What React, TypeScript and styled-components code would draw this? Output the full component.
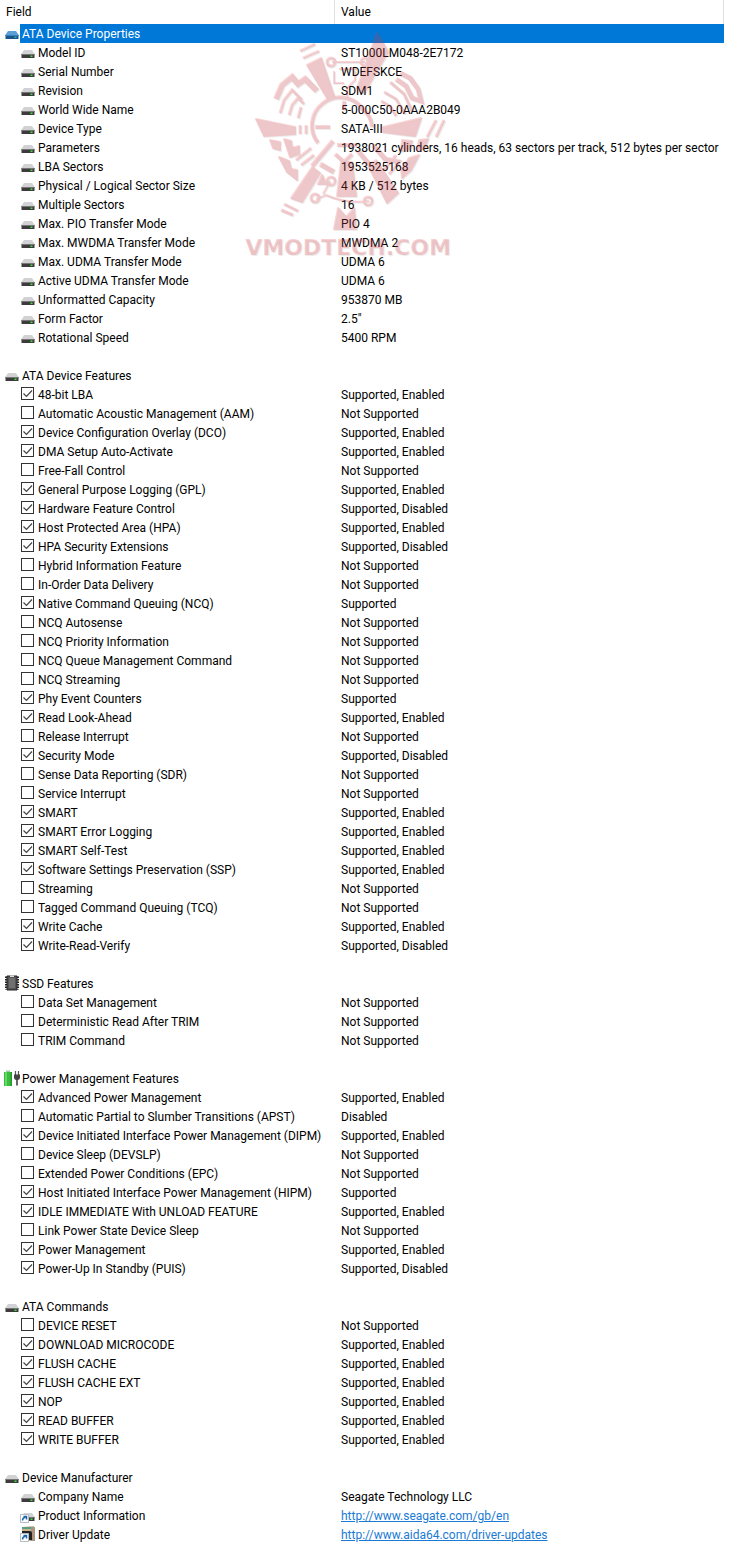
import React from "react";
import styled, { createGlobalStyle, css } from "styled-components";

type IconName = "drive" | "chip" | "power" | "driveLink" | "updateLink";
type Item = { name: string; value: string; icon?: IconName; checked?: boolean; href?: string };
type Group = { title: string; icon: IconName; selected?: boolean; items: Item[] };

const prop = (name: string, value: string): Item => ({ name, value, icon: "drive" });
const on = (name: string, value = "Supported, Enabled"): Item => ({ name, value, checked: true });
const off = (name: string, value = "Not Supported"): Item => ({ name, value, checked: false });

const groups: Group[] = [
  {
    title: "ATA Device Properties",
    icon: "drive",
    selected: true,
    items: [
      prop("Model ID", "ST1000LM048-2E7172"),
      prop("Serial Number", "WDEFSKCE"),
      prop("Revision", "SDM1"),
      prop("World Wide Name", "5-000C50-0AAA2B049"),
      prop("Device Type", "SATA-III"),
      prop("Parameters", "1938021 cylinders, 16 heads, 63 sectors per track, 512 bytes per sector"),
      prop("LBA Sectors", "1953525168"),
      prop("Physical / Logical Sector Size", "4 KB / 512 bytes"),
      prop("Multiple Sectors", "16"),
      prop("Max. PIO Transfer Mode", "PIO 4"),
      prop("Max. MWDMA Transfer Mode", "MWDMA 2"),
      prop("Max. UDMA Transfer Mode", "UDMA 6"),
      prop("Active UDMA Transfer Mode", "UDMA 6"),
      prop("Unformatted Capacity", "953870 MB"),
      prop("Form Factor", '2.5"'),
      prop("Rotational Speed", "5400 RPM"),
    ],
  },
  {
    title: "ATA Device Features",
    icon: "drive",
    items: [
      on("48-bit LBA"),
      off("Automatic Acoustic Management (AAM)"),
      on("Device Configuration Overlay (DCO)"),
      on("DMA Setup Auto-Activate"),
      off("Free-Fall Control"),
      on("General Purpose Logging (GPL)"),
      on("Hardware Feature Control", "Supported, Disabled"),
      on("Host Protected Area (HPA)"),
      on("HPA Security Extensions", "Supported, Disabled"),
      off("Hybrid Information Feature"),
      off("In-Order Data Delivery"),
      on("Native Command Queuing (NCQ)", "Supported"),
      off("NCQ Autosense"),
      off("NCQ Priority Information"),
      off("NCQ Queue Management Command"),
      off("NCQ Streaming"),
      on("Phy Event Counters", "Supported"),
      on("Read Look-Ahead"),
      off("Release Interrupt"),
      on("Security Mode", "Supported, Disabled"),
      off("Sense Data Reporting (SDR)"),
      off("Service Interrupt"),
      on("SMART"),
      on("SMART Error Logging"),
      on("SMART Self-Test"),
      on("Software Settings Preservation (SSP)"),
      off("Streaming"),
      off("Tagged Command Queuing (TCQ)"),
      on("Write Cache"),
      on("Write-Read-Verify", "Supported, Disabled"),
    ],
  },
  {
    title: "SSD Features",
    icon: "chip",
    items: [off("Data Set Management"), off("Deterministic Read After TRIM"), off("TRIM Command")],
  },
  {
    title: "Power Management Features",
    icon: "power",
    items: [
      on("Advanced Power Management"),
      off("Automatic Partial to Slumber Transitions (APST)", "Disabled"),
      on("Device Initiated Interface Power Management (DIPM)"),
      off("Device Sleep (DEVSLP)"),
      off("Extended Power Conditions (EPC)"),
      on("Host Initiated Interface Power Management (HIPM)", "Supported"),
      on("IDLE IMMEDIATE With UNLOAD FEATURE"),
      off("Link Power State Device Sleep"),
      on("Power Management"),
      on("Power-Up In Standby (PUIS)", "Supported, Disabled"),
    ],
  },
  {
    title: "ATA Commands",
    icon: "drive",
    items: [
      off("DEVICE RESET"),
      on("DOWNLOAD MICROCODE"),
      on("FLUSH CACHE"),
      on("FLUSH CACHE EXT"),
      on("NOP"),
      on("READ BUFFER"),
      on("WRITE BUFFER"),
    ],
  },
  {
    title: "Device Manufacturer",
    icon: "drive",
    items: [
      prop("Company Name", "Seagate Technology LLC"),
      { name: "Product Information", value: "http://www.seagate.com/gb/en", icon: "driveLink", href: "http://www.seagate.com/gb/en" },
      { name: "Driver Update", value: "http://www.aida64.com/driver-updates", icon: "updateLink", href: "http://www.aida64.com/driver-updates" },
    ],
  },
];

const GlobalStyle = createGlobalStyle`
  body {
    margin: 0;
    background: #fff;
    color: #000;
    font: 12px/17px Roboto, "Segoe UI", sans-serif;
  }
`;

const Page = styled.main`
  position: relative;
  padding-right: 13px;
`;

const Sheet = styled.table`
  width: 100%;
  table-layout: fixed;
  border-collapse: separate;
  border-spacing: 0;
`;

const FieldColumn = styled.col`
  width: 335px;
`;

const HeadCell = styled.th`
  box-sizing: border-box;
  height: 24px;
  padding: 1px 6px 0;
  border-right: 1px solid #dfdfdf;
  font-weight: 400;
  text-align: left;
`;

const Row = styled.tr`
  height: 19px;
`;

const NameCell = styled.th<{ $nested?: boolean }>`
  padding: 0 0 0 ${(p) => (p.$nested ? 20 : 4)}px;
  font-weight: 400;
  text-align: left;
  white-space: nowrap;
`;

const ValueCell = styled.td<{ $selected?: boolean }>`
  padding: 2px 6px 0;
  white-space: nowrap;
  ${(p) => p.$selected && css`background: #0078d7;`}
`;

const nameLine = css`
  display: flex;
  align-items: center;
  height: 19px;
`;

const NameLine = styled.div`
  ${nameLine}
`;

const CheckLine = styled.label`
  ${nameLine}
`;

const Name = styled.span<{ $selected?: boolean }>`
  flex: 1;
  padding: 2px 0 0 2px;
  ${(p) => p.$selected && css`
    background: #0078d7;
    color: #fff;
  `}
`;

const Glyph = styled.svg`
  flex: none;
  width: 16px;
  height: 16px;
  margin-bottom: 1px;
`;

const CheckSlot = styled.span`
  display: grid;
  flex: none;
  width: 13px;
  height: 13px;
  margin: 0 2px 2px 1px;

  > * {
    grid-area: 1 / 1;
  }
`;

const CheckInput = styled.input`
  appearance: none;
  box-sizing: border-box;
  width: 13px;
  height: 13px;
  margin: 0;
  border: 1px solid #333;
  background: #fff;
`;

const CheckMark = styled.svg`
  width: 13px;
  height: 13px;
  pointer-events: none;
  visibility: hidden;

  ${CheckInput}:checked + & {
    visibility: visible;
  }
`;

const Link = styled.a`
  color: #1a7ad4;
  text-decoration: underline;
`;

const Watermark = styled.div`
  position: absolute;
  top: 30px;
  left: 244px;
  width: 208px;
  display: flex;
  flex-direction: column;
  align-items: center;
  pointer-events: none;
`;

const Emblem = styled.svg`
  width: 208px;
  height: 202px;
`;

const Brand = styled.div`
  color: rgba(236, 70, 76, 0.25);
  font: 700 22px/32px "DejaVu Sans", sans-serif;
  text-shadow: 1px 1px 1px rgba(90, 90, 90, 0.12);
`;

function Drive({ blue }: { blue?: boolean }) {
  return (
    <>
      <path d="M4 6h8l3 4.500H1z" fill={blue ? "#5b9fd6" : "#d0d2d4"} />
      <path d="M1.500 10h13v3.500q0 .5-.5.5H2q-.5 0-.5-.5z" fill={blue ? "#1c5689" : "#3c3c3c"} />
      <path d="M1.500 10h13v1h-13z" fill={blue ? "#357fbe" : "#777"} />
      <path d="M10.500 11.500h2V13h-2z" fill={blue ? "#22b7a0" : "#3ee03e"} />
    </>
  );
}

function Shortcut() {
  return (
    <>
      <path d="M.5 7.500h8v8h-8z" fill="#fff" stroke="#b5bcc4" />
      <path d="M2.500 13.500q0-3 3-3.300M3.500 9.500h3v3" fill="none" stroke="#1765ad" strokeWidth="1.500" />
    </>
  );
}

function RowIcon({ name, blue }: { name: IconName; blue?: boolean }) {
  return (
    <Glyph viewBox="0 0 16 16" aria-hidden="true">
      {name === "drive" && <Drive blue={blue} />}
      {name === "chip" && (
        <>
          <path d="M3 1h10v14H3z" fill="#555" stroke="#222" />
          <path d="M2 1.500v13M14 1.500v13" fill="none" stroke="#222" strokeWidth="2" strokeDasharray="1.500 1" />
          <path d="M5 3h6v10H5z" fill="#707070" />
          <path d="M6 .5h4v1.500H6z" fill="#ddd" />
        </>
      )}
      {name === "power" && (
        <>
          <path d="M2 .5h4v1.500H2z" fill="#9ccf9c" />
          <path d="M0 2h8v14H0z" fill="#39bf3e" />
          <path d="M1 2h2v14H1z" fill="#6bd56b" />
          <path d="M6.500 2H8v14H6.500z" fill="#239a2a" />
          <path d="M11.500 1v4M14.500 1v4" stroke="#555" strokeWidth="1.200" />
          <path d="M10 4.500h6v3q0 2-2 2.500h-2q-2-.5-2-2.500z" fill="#444" />
          <path d="M13 10v5.500" stroke="#333" strokeWidth="1.500" />
        </>
      )}
      {name === "driveLink" && (
        <>
          <Drive />
          <Shortcut />
        </>
      )}
      {name === "updateLink" && (
        <>
          <path d="M2 1l12-1v15H2z" fill="#c9b48f" />
          <path d="M11 1h4v14h-4z" fill="#9a9c8c" />
          <path d="M2 1h9v2H2z" fill="#5a9f82" />
          <path d="M2 5h8q2 0 2 2v7H9V8H2z" fill="#222" />
          <path d="M13 2v12" stroke="#c98a6c" />
          <Shortcut />
        </>
      )}
    </Glyph>
  );
}

function EmblemShapes() {
  return (
    <>
      <g strokeWidth="2" strokeLinejoin="round">
        <path d="M307 65l14-7 13 38-7 2z" />
        <path d="M377 33l11 19-24 41-7-5z" />
        <path d="M256 119l39 8v7l-31 2z" />
        <path d="M383 127l38-9-6 18-32-4z" />
        <path d="M312 167l8 6-18 29-11-4z" />
        <path d="M368 165l8-5 22 33-11 10z" />
        <path d="M341 162h11l4 34h-19z" />
        <path d="M338 208l8 9 8-9 2 21h-22z" />
        <path d="M270 140l10 2v8l-7-2zM284 139l7 2 1 7 7-2v8l-9 3z" />
        <path d="M279 157l10 4 2 8 6 1v10l-10-8z" />
        <path d="M402 140l10 1-2 8-9 2zM419 140l9-1-4 10-7 1z" />
        <path d="M409 158l10-3-8 15-9 8-1-9z" />
        <path d="M318 184l4-9 4 9z" />
      </g>
      <g fill="none" strokeWidth="3">
        <path d="M300 51l15-7M303 58l16-7M284 204l14 7M281 210l12 5" />
        <path d="M427 137l9-17M436 137l8-17M300 125v9M306 125v9" />
        <path d="M276 99l6-14 10-8 6 7 7-5 12 12" strokeWidth="6" />
        <path d="M400 73l10 5 8 11 3 12-9-3-6-12-10-7" strokeWidth="5" />
        <path d="M280 113l4-13 8-10 10 10M289 115l3-10 6-7 6 6M298 118l3-11" />
        <path d="M384 92l12 7 9 15M381 101l9 5 6 10M390 82l14 12 8 17" />
        <path d="M360 107q11 7 12 20M318 143a28 28 0 1 1 44-35M315 127h15M344 101v9" strokeWidth="4" />
        <path d="M312 166l21-25M320 164l14 8M373 145l12 14 14 3M358 151l16 19" strokeWidth="5" />
        <path d="M296 160l15-12M301 165l13-10M376 179l20-24M389 174l12-14" />
        <path d="M332 62h33M334 71v12h10M355 71v9l-8 8v12M339 69h18M316 199l10-4q20 9 43 6M330 181l-7 13" strokeWidth="2" />
        <circle cx="331" cy="62" r="4" />
        <circle cx="365" cy="62" r="4" />
        <circle cx="331" cy="181" r="4" />
        <circle cx="315" cy="198" r="4" />
        <circle cx="368" cy="201" r="4" />
        <path d="M337 145h20M335 154l9 8 8-8" strokeWidth="4" />
      </g>
    </>
  );
}

function SiteMark() {
  return (
    <Watermark>
      <Emblem viewBox="244 30 208 202" aria-hidden="true">
        <g opacity="0.1" fill="#555" stroke="#555" transform="translate(1 1)">
          <EmblemShapes />
        </g>
        <g opacity="0.2" fill="#f0343c" stroke="#f0343c">
          <EmblemShapes />
        </g>
      </Emblem>
      <Brand>VMODTECH.COM</Brand>
    </Watermark>
  );
}

function ItemRow({ item }: { item: Item }) {
  return (
    <Row>
      <NameCell scope="row" $nested>
        {item.checked === undefined ? (
          <NameLine>
            <RowIcon name={item.icon ?? "drive"} />
            <Name>{item.name}</Name>
          </NameLine>
        ) : (
          <CheckLine>
            <CheckSlot>
              <CheckInput type="checkbox" defaultChecked={item.checked} />
              <CheckMark viewBox="0 0 13 13" aria-hidden="true">
                <path d="M2.500 6.500l3 3 5.500-6" fill="none" stroke="#444" strokeWidth="1.200" />
              </CheckMark>
            </CheckSlot>
            <Name>{item.name}</Name>
          </CheckLine>
        )}
      </NameCell>
      <ValueCell>{item.href ? <Link href={item.href}>{item.value}</Link> : item.value}</ValueCell>
    </Row>
  );
}

export default function App() {
  return (
    <Page>
      <GlobalStyle />
      <Sheet>
        <colgroup>
          <FieldColumn />
          <col />
        </colgroup>
        <thead>
          <tr>
            <HeadCell scope="col">Field</HeadCell>
            <HeadCell scope="col">Value</HeadCell>
          </tr>
        </thead>
        {groups.map((group, index) => (
          <tbody key={group.title}>
            {index > 0 && (
              <Row aria-hidden="true">
                <td colSpan={2} />
              </Row>
            )}
            <Row>
              <NameCell scope="rowgroup">
                <NameLine>
                  <RowIcon name={group.icon} blue={group.selected} />
                  <Name $selected={group.selected}>{group.title}</Name>
                </NameLine>
              </NameCell>
              <ValueCell $selected={group.selected} />
            </Row>
            {group.items.map((item) => (
              <ItemRow key={item.name} item={item} />
            ))}
          </tbody>
        ))}
      </Sheet>
      <SiteMark />
    </Page>
  );
}
